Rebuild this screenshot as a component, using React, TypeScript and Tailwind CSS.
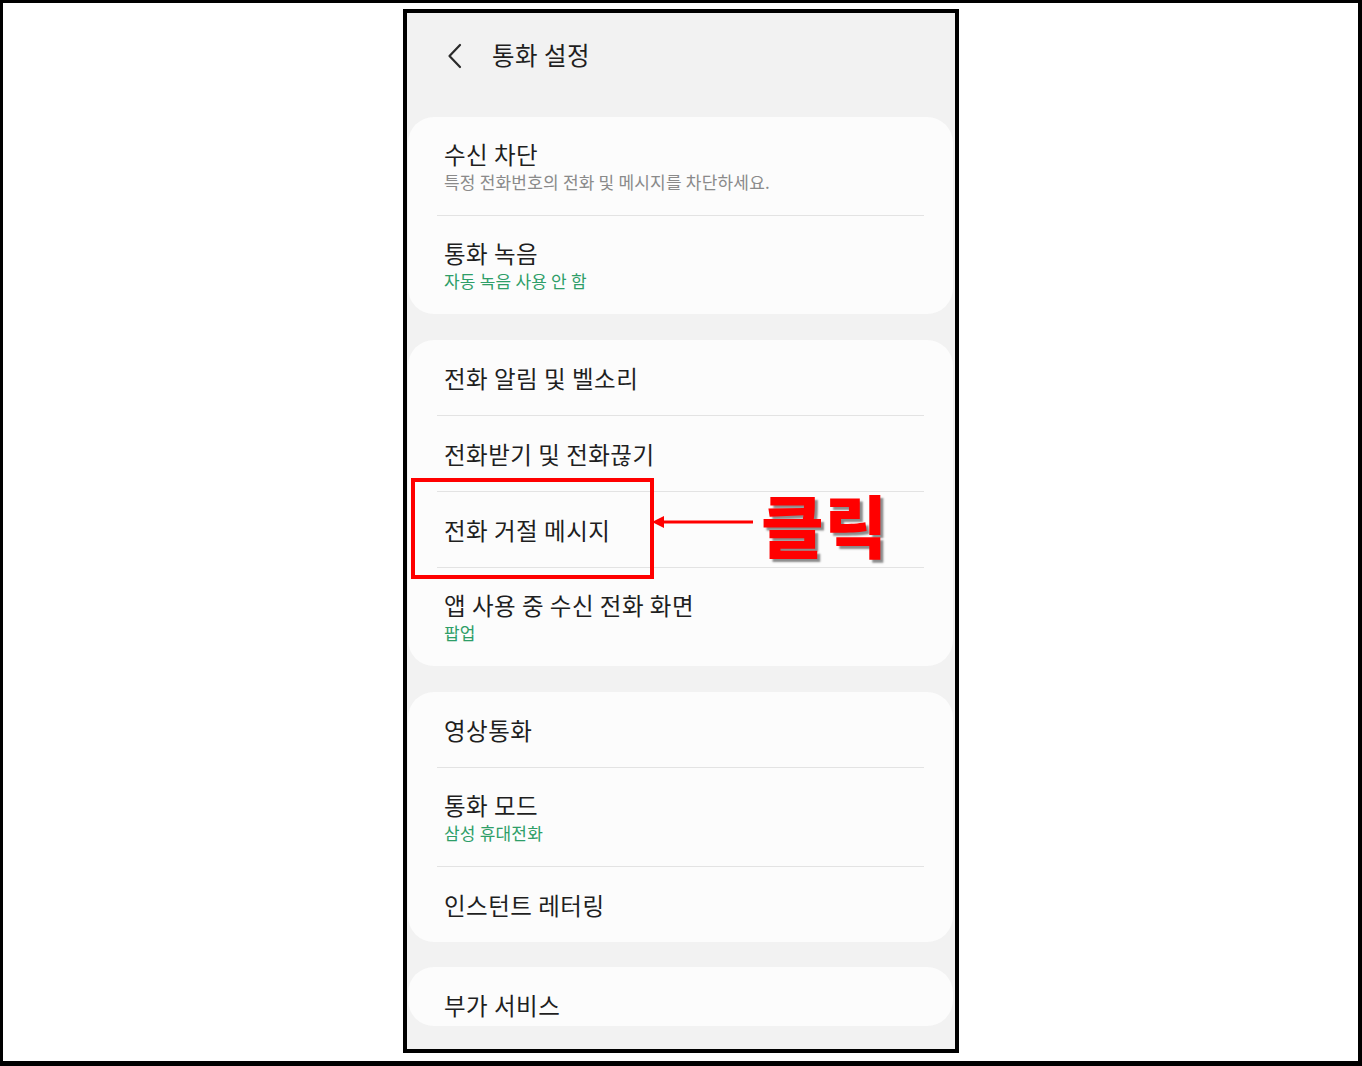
const font = { fontFamily: '"Noto Sans CJK KR", "Noto Sans", sans-serif' };

type Row = { title: string; sub?: string; tone?: "gray" | "green" };

const groups: Row[][] = [
  [
    { title: "수신 차단", sub: "특정 전화번호의 전화 및 메시지를 차단하세요.", tone: "gray" },
    { title: "통화 녹음", sub: "자동 녹음 사용 안 함", tone: "green" },
  ],
  [
    { title: "전화 알림 및 벨소리" },
    { title: "전화받기 및 전화끊기" },
    { title: "전화 거절 메시지" },
    { title: "앱 사용 중 수신 전화 화면", sub: "팝업", tone: "green" },
  ],
  [
    { title: "영상통화" },
    { title: "통화 모드", sub: "삼성 휴대전화", tone: "green" },
    { title: "인스턴트 레터링" },
  ],
];

const titleCls = "text-[23.5px] leading-[28px] tracking-[0.5px] text-[#1f1f1f]";

function SettingRow({ row }: { row: Row }) {
  if (!row.sub) {
    return (
      <div className="flex h-[75px] items-center px-[36px]">
        <p className={titleCls}>{row.title}</p>
      </div>
    );
  }
  return (
    <div className="h-[98px] px-[36px] pt-[23px]">
      <p className={titleCls}>{row.title}</p>
      <p
        className={`mt-1 text-[17px] leading-5 tracking-[0.2px] ${
          row.tone === "green" ? "text-[#2e9e68]" : "text-[#8a8a8a]"
        }`}
      >
        {row.sub}
      </p>
    </div>
  );
}

export default function App() {
  return (
    <div
      className="h-[1066px] w-[1362px] border-t-[3px] border-l-[3px] border-r-4 border-b-[5px] border-black bg-white pl-[400px] pt-[6px]"
      style={font}
    >
      <div className="relative h-[1044px] w-[556px] overflow-hidden border-4 border-black bg-[#f2f2f2]">
        {/* header */}
        <div className="flex h-[104px] items-start pt-[28px] pl-[40px]">
          <svg width="16" height="26" viewBox="0 0 16 26" className="mt-[2px]">
            <path d="M13 2 L2.5 13 L13 24" fill="none" stroke="#2a2a2a" strokeWidth="2.2" strokeLinecap="round" strokeLinejoin="round" />
          </svg>
          <h1 className="ml-[29px] text-[24.5px] leading-[28px] tracking-[0.5px] text-[#1f1f1f]">통화 설정</h1>
        </div>

        <div className="flex flex-col gap-[26px]">
          {groups.map((group, gi) => (
            <div key={gi} className="ml-px w-[545px] rounded-[26px] bg-[#fcfcfc]">
              {group.map((row, ri) => (
                <div key={row.title}>
                  {ri > 0 ? <div className="mx-[29px] h-px bg-[#e3e3e3]" /> : null}
                  <SettingRow row={row} />
                </div>
              ))}
            </div>
          ))}
          <div className="-mt-px ml-px h-[59px] w-[545px] overflow-hidden rounded-[26px] bg-[#fcfcfc]">
            <div className="flex h-[75px] items-center px-[36px]">
              <p className={titleCls}>부가 서비스</p>
            </div>
          </div>
        </div>

        {/* annotation */}
        <div className="absolute left-[4px] top-[465px] h-[101px] w-[243px] border-4 border-[#ff0000]" />
        <svg className="absolute left-[244px] top-[502px]" width="104" height="14" viewBox="0 0 104 14">
          <path d="M1 7 L13 1 L13 13 Z" fill="#ff0000" />
          <rect x="10" y="5.5" width="92" height="3" fill="#ff0000" />
        </svg>
        <p
          className="absolute left-[354px] top-[466px] text-[68px] font-black leading-[90px] tracking-[1px] text-[#ff0000]"
          style={{ textShadow: "3px 3px 2px rgba(0,0,0,0.45)" }}
        >
          클릭
        </p>
      </div>
    </div>
  );
}
